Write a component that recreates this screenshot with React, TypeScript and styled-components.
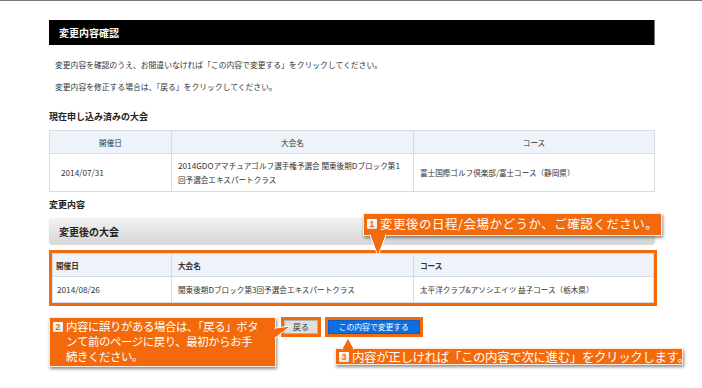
import React from 'react'
import styled, { createGlobalStyle } from 'styled-components'

const ORANGE = '#f26a0c'

const GlobalStyle = createGlobalStyle`
  html, body {
    margin: 0;
    padding: 0;
    background: #fff;
  }
  body {
    font-family: "Noto Sans CJK JP", "Noto Sans", sans-serif;
    color: #333;
  }
`

const Root = styled.div`
  position: relative;
  width: 702px;
  height: 388px;
  overflow: hidden;
  box-sizing: border-box;
  border-top: 1px solid #7a7a7a;
`

const Page = styled.div`
  width: 606px;
  margin-left: 49px;
  padding-top: 19px;
`

const TitleBar = styled.h1`
  margin: 0;
  height: 25px;
  display: flex;
  align-items: center;
  padding-left: 10px;
  background: #000;
  border-right: 1px solid #777;
  color: #fff;
  font-size: 10px;
  font-weight: bold;
`

const Lead = styled.p<{ $first?: boolean }>`
  margin: ${(p) => (p.$first ? '9px' : '0')} 0 0 6px;
  font-size: 7.8px;
  line-height: 22px;
  color: #333;
`

const SectionTitle = styled.h2<{ $top: number }>`
  margin: ${(p) => p.$top}px 0 6px;
  font-size: 9px;
  line-height: 14px;
  font-weight: bold;
  color: #222;
`

const Table = styled.table`
  width: 100%;
  border-collapse: collapse;
  table-layout: fixed;
  font-size: 7.6px;
  color: #333;
`

const Th = styled.th<{ $align?: string }>`
  height: 22px;
  padding: 0 6px;
  background: #eef2f9;
  border: 1px solid #d6dce6;
  text-align: ${(p) => p.$align || 'center'};
  font-weight: ${(p) => (p.$align ? 'bold' : 'normal')};
`

const Td = styled.td<{ $h: number }>`
  height: ${(p) => p.$h}px;
  padding: 0 6px;
  border: 1px solid #d6dce6;
  line-height: 14px;
  vertical-align: middle;
  white-space: nowrap;
`

const Num = styled.span`
  font-size: 8.2px;
`

const GrayBar = styled.div`
  height: 26px;
  margin-bottom: 6px;
  display: flex;
  align-items: center;
  padding-left: 10px;
  box-sizing: border-box;
  border-radius: 3px;
  background: linear-gradient(#f3f3f3, #d6d6d6);
  box-shadow: 0 1px 1px rgba(0, 0, 0, 0.15);
  font-size: 10px;
  font-weight: bold;
  color: #222;
`

const Highlight = styled.div`
  border: 3px solid ${ORANGE};
  width: 608px;
  box-sizing: border-box;
  background: #fff;
`

const ButtonRow = styled.div`
  margin-top: 11px;
  display: flex;
  justify-content: center;
  gap: 4px;
`

const ButtonFrame = styled.div`
  border: 3px solid ${ORANGE};
  display: flex;
`

const Button = styled.button<{ $primary?: boolean }>`
  height: 14px;
  padding: 0 ${(p) => (p.$primary ? '10px' : '8px')};
  border: 1px solid ${(p) => (p.$primary ? '#0a5fc4' : '#b5b5b5')};
  background: ${(p) => (p.$primary ? '#0c6fe0' : '#dedede')};
  color: ${(p) => (p.$primary ? '#fff' : '#333')};
  font-family: inherit;
  font-size: 7.8px;
  line-height: 12px;
  cursor: pointer;
`

const Callout = styled.div<{ $x: number; $y: number; $w: number; $h: number }>`
  position: absolute;
  left: ${(p) => p.$x}px;
  top: ${(p) => p.$y}px;
  width: ${(p) => p.$w}px;
  height: ${(p) => p.$h}px;
  box-sizing: border-box;
  padding: 0 3px;
  display: flex;
  align-items: flex-start;
  gap: 3px;
  background: ${ORANGE};
  border: 1px solid rgba(255, 255, 255, 0.85);
  box-shadow: 1px 2px 3px rgba(0, 0, 0, 0.45);
  color: #fff;
  line-height: 15px;
  z-index: 2;
`

const Badge = styled.span<{ $mt: number }>`
  flex: none;
  margin-top: ${(p) => p.$mt}px;
  width: 10px;
  height: 10px;
  display: flex;
  align-items: center;
  justify-content: center;
  border-radius: 1px;
  background: linear-gradient(#fff, #e4e4e4);
  color: ${ORANGE};
  font-family: "Liberation Sans", sans-serif;
  font-size: 9px;
  font-weight: bold;
  line-height: 10px;
`

const CalloutText = styled.span<{ $pt: number; $ls?: number; $fs?: number }>`
  display: block;
  padding-top: ${(p) => p.$pt}px;
  letter-spacing: ${(p) => p.$ls || 0}px;
  font-size: ${(p) => p.$fs || 12.5}px;
  white-space: nowrap;
`

const Pointer = styled.svg`
  position: absolute;
  left: 0;
  top: 0;
  z-index: 3;
  pointer-events: none;
`

export default function App() {
  return (
    <>
      <GlobalStyle />
      <Root>
        <Page>
          <TitleBar>変更内容確認</TitleBar>
          <Lead $first>変更内容を確認のうえ、お間違いなければ「この内容で変更する」をクリックしてください。</Lead>
          <Lead>変更内容を修正する場合は、「戻る」をクリックしてください。</Lead>

          <SectionTitle $top={12}>現在申し込み済みの大会</SectionTitle>
          <Table>
            <colgroup>
              <col style={{ width: 122 }} />
              <col style={{ width: 242 }} />
              <col />
            </colgroup>
            <thead>
              <tr>
                <Th>開催日</Th>
                <Th>大会名</Th>
                <Th>コース</Th>
              </tr>
            </thead>
            <tbody>
              <tr>
                <Td $h={37} style={{ paddingLeft: 11 }}><Num>2014/07/31</Num></Td>
                <Td $h={37}>
                  <Num>2014GDO</Num>アマチュアゴルフ選手権予選会 関東後期<Num>D</Num>ブロック第<Num>1</Num>
                  <br />
                  回予選会エキスパートクラス
                </Td>
                <Td $h={37}>富士国際ゴルフ倶楽部/富士コース（静岡県）</Td>
              </tr>
            </tbody>
          </Table>

          <SectionTitle $top={6}>変更内容</SectionTitle>
          <GrayBar>変更後の大会</GrayBar>

          <Highlight>
            <Table>
              <colgroup>
                <col style={{ width: 119 }} />
                <col style={{ width: 242 }} />
                <col />
              </colgroup>
              <thead>
                <tr>
                  <Th $align="left" style={{ paddingLeft: 3 }}>開催日</Th>
                  <Th $align="left">大会名</Th>
                  <Th $align="left">コース</Th>
                </tr>
              </thead>
              <tbody>
                <tr>
                  <Td $h={25} style={{ paddingLeft: 4 }}><Num>2014/08/26</Num></Td>
                  <Td $h={25}>関東後期<Num>D</Num>ブロック第<Num>3</Num>回予選会エキスパートクラス</Td>
                  <Td $h={25}>太平洋クラブ&amp;アソシエイツ 益子コース（栃木県）</Td>
                </tr>
              </tbody>
            </Table>
          </Highlight>

          <ButtonRow>
            <ButtonFrame>
              <Button>戻る</Button>
            </ButtonFrame>
            <ButtonFrame>
              <Button $primary>この内容で変更する</Button>
            </ButtonFrame>
          </ButtonRow>
        </Page>

        <Callout $x={363} $y={212} $w={299} $h={23}>
          <Badge $mt={5}>1</Badge>
          <CalloutText $pt={2} $ls={0.5}>変更後の日程/会場かどうか、ご確認ください。</CalloutText>
        </Callout>

        <Callout $x={49} $y={316} $w={227} $h={50}>
          <Badge $mt={4}>2</Badge>
          <CalloutText $pt={1} $ls={-0.4} $fs={11.4}>
            内容に誤りがある場合は、「戻る」ボタ
            <br />
            ンて前のページに戻り、最初からお手
            <br />
            続きください。
          </CalloutText>
        </Callout>

        <Callout $x={335} $y={347} $w={348} $h={17}>
          <Badge $mt={3}>3</Badge>
          <CalloutText $pt={0} $ls={-0.4}>内容が正しければ「この内容で次に進む」をクリックします。</CalloutText>
        </Callout>

        <Pointer width={702} height={388} viewBox="0 0 702 388">
          <polygon points="370,234 386,234 378,255" fill={ORANGE} stroke="#fff" strokeWidth={1} strokeLinejoin="round" />
          <rect x={371} y={232} width={14} height={3} fill={ORANGE} />
          <polygon points="275,327 275,337 291,325" fill={ORANGE} stroke="#fff" strokeWidth={1} strokeLinejoin="round" />
          <rect x={273} y={328} width={3} height={8} fill={ORANGE} />
          <polygon points="342,348 354,348 348,337" fill={ORANGE} stroke="#fff" strokeWidth={1} strokeLinejoin="round" />
          <rect x={343} y={347} width={10} height={3} fill={ORANGE} />
        </Pointer>
      </Root>
    </>
  )
}
